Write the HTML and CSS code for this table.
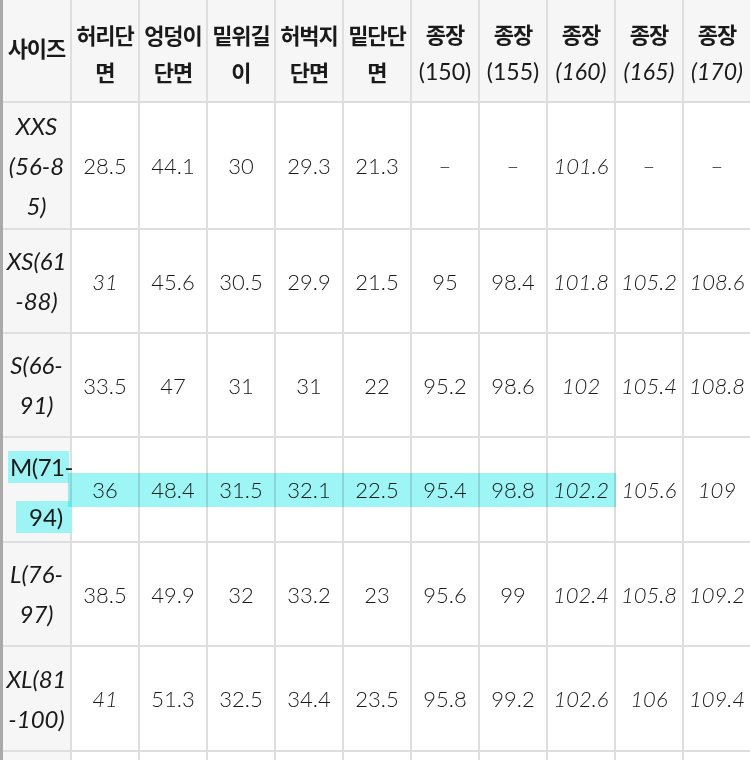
FILE: index.html
```html
<!DOCTYPE html>
<html lang="ko">
<head>
<meta charset="utf-8">
<title>사이즈표</title>
<link rel="stylesheet" href="styles.css">
</head>
<body>
<div class="sheet">
  <div class="grid">
    <div class="c hd side"><span>사이즈</span></div>
    <div class="c hd"><span>허리단<br>면</span></div>
    <div class="c hd"><span>엉덩이<br>단면</span></div>
    <div class="c hd"><span>밑위길<br>이</span></div>
    <div class="c hd"><span>허벅지<br>단면</span></div>
    <div class="c hd"><span>밑단단<br>면</span></div>
    <div class="c hd"><span>종장<br><i>(150)</i></span></div>
    <div class="c hd"><span>종장<br><i>(155)</i></span></div>
    <div class="c hd"><span>종장<br><i class="sl">(160)</i></span></div>
    <div class="c hd"><span>종장<br><i class="sl">(165)</i></span></div>
    <div class="c hd"><span>종장<br><i class="sl">(170)</i></span></div>

    <div class="c side lab"><span class="sl">XXS<br>(56-8<br>5)</span></div>
    <div class="c d">28.5</div><div class="c d">44.1</div><div class="c d">30</div><div class="c d">29.3</div><div class="c d">21.3</div><div class="c d">–</div><div class="c d">–</div><div class="c d sl">101.6</div><div class="c d">–</div><div class="c d">–</div>

    <div class="c side lab"><span class="sl">XS(61<br>-88)</span></div>
    <div class="c d sl">31</div><div class="c d">45.6</div><div class="c d">30.5</div><div class="c d">29.9</div><div class="c d">21.5</div><div class="c d">95</div><div class="c d">98.4</div><div class="c d sl">101.8</div><div class="c d sl">105.2</div><div class="c d sl">108.6</div>

    <div class="c side lab"><span class="sl">S(66-<br>91)</span></div>
    <div class="c d">33.5</div><div class="c d">47</div><div class="c d">31</div><div class="c d">31</div><div class="c d">22</div><div class="c d">95.2</div><div class="c d">98.6</div><div class="c d sl">102</div><div class="c d sl">105.4</div><div class="c d sl">108.8</div>

    <div class="c side lab mrow"><span class="mk mk1">M(71-</span><span class="mk mk2">94)</span></div>
    <div class="c d">36</div><div class="c d">48.4</div><div class="c d">31.5</div><div class="c d">32.1</div><div class="c d">22.5</div><div class="c d">95.4</div><div class="c d">98.8</div><div class="c d sl">102.2</div><div class="c d sl">105.6</div><div class="c d sl">109</div>

    <div class="c side lab"><span class="sl">L(76-<br>97)</span></div>
    <div class="c d">38.5</div><div class="c d">49.9</div><div class="c d">32</div><div class="c d">33.2</div><div class="c d">23</div><div class="c d">95.6</div><div class="c d">99</div><div class="c d sl">102.4</div><div class="c d sl">105.8</div><div class="c d sl">109.2</div>

    <div class="c side lab"><span class="sl">XL(81<br>-100)</span></div>
    <div class="c d sl">41</div><div class="c d">51.3</div><div class="c d">32.5</div><div class="c d">34.4</div><div class="c d">23.5</div><div class="c d">95.8</div><div class="c d">99.2</div><div class="c d sl">102.6</div><div class="c d sl">106</div><div class="c d sl">109.4</div>

    <div class="c side"></div>
    <div class="c d"></div><div class="c d"></div><div class="c d"></div><div class="c d"></div><div class="c d"></div><div class="c d"></div><div class="c d"></div><div class="c d"></div><div class="c d"></div><div class="c d"></div>
  </div>
  <div class="marker"></div>
</div>
</body>
</html>
```

FILE: styles.css
```css
html, body {
  margin: 0;
  padding: 0;
  background: #ffffff;
  overflow: hidden;
}

.sheet {
  position: relative;
  width: 760px;
  height: 760px;
  border-left: 3px solid #a9a9a9;
  box-sizing: border-box;
  font-family: "Lato", "Noto Sans CJK KR", sans-serif;
  color: #1a1a1a;
}

.grid {
  display: grid;
  grid-template-columns: 69px repeat(10, 68px);
  grid-template-rows: 103px 127px 104px 104px 105px 104px 105px 40px;
}

.c {
  box-sizing: border-box;
  border-right: 2px solid #dedede;
  border-bottom: 2px solid #dedede;
  display: flex;
  align-items: center;
  justify-content: center;
  text-align: center;
  background: #ffffff;
}

.hd {
  background: #f6f6f6;
  font-family: "Noto Sans CJK KR", sans-serif;
  font-weight: 700;
  font-size: 22px;
  line-height: 37px;
  padding-top: 4px;
  letter-spacing: -1px;
  white-space: nowrap;
}

.hd i {
  font-family: "Lato", sans-serif;
  font-style: normal;
  font-weight: 400;
  font-size: 23px;
  letter-spacing: 0;
}

.hd i.sl {
  font-style: italic;
}

.side {
  background: #f6f6f6;
}

.hd.side {
  padding-top: 0;
  padding-bottom: 6px;
}

.lab {
  font-family: "Lato", sans-serif;
  font-weight: 400;
  font-size: 24px;
  line-height: 40px;
  letter-spacing: 0;
  white-space: nowrap;
}

.d {
  font-family: "Lato", sans-serif;
  font-weight: 300;
  font-size: 22px;
  white-space: nowrap;
}

.sl {
  font-style: italic;
}

.mrow {
  flex-direction: column;
  align-items: stretch;
  justify-content: flex-start;
  padding-top: 13px;
}

.mk {
  display: block;
  background: #9ef4f4;
  line-height: 32px;
  height: 32px;
}

.mk1 {
  margin-left: 5px;
  margin-right: 1px;
  text-align: left;
  padding-left: 2px;
  letter-spacing: -0.5px;
}

.mk2 {
  margin-top: 18px;
  margin-left: 13px;
  margin-right: -2px;
  text-align: left;
  padding-left: 13px;
}

.marker {
  position: absolute;
  left: 65px;
  top: 473px;
  width: 548px;
  height: 34px;
  background: rgba(0, 228, 232, 0.38);
  mix-blend-mode: multiply;
  pointer-events: none;
}
```
